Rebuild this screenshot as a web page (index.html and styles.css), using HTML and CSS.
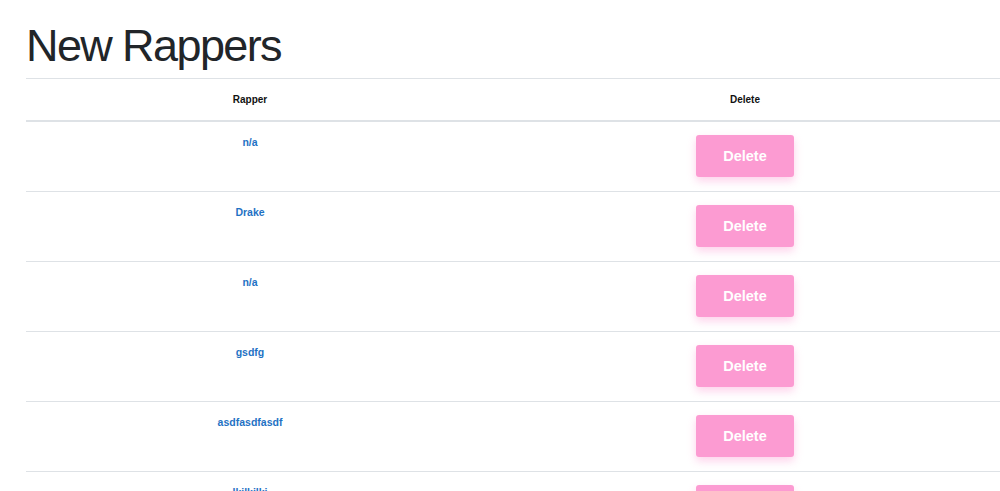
FILE: index.html
```html
<!DOCTYPE html>
<html>
<head>
<meta charset="utf-8">
<link rel="stylesheet" href="styles.css">
</head>
<body>
<div class="page">
  <h1 class="title">New Rappers</h1>
  <table class="rappers">
    <thead>
      <tr><th class="col-name">Rapper</th><th class="col-del">Delete</th></tr>
    </thead>
    <tbody>
      <tr><td class="name-cell"><a class="name">n/a</a></td><td class="del-cell"><button class="del">Delete</button></td></tr>
      <tr><td class="name-cell"><a class="name">Drake</a></td><td class="del-cell"><button class="del">Delete</button></td></tr>
      <tr><td class="name-cell"><a class="name">n/a</a></td><td class="del-cell"><button class="del">Delete</button></td></tr>
      <tr><td class="name-cell"><a class="name">gsdfg</a></td><td class="del-cell"><button class="del">Delete</button></td></tr>
      <tr><td class="name-cell"><a class="name">asdfasdfasdf</a></td><td class="del-cell"><button class="del">Delete</button></td></tr>
      <tr><td class="name-cell"><a class="name">lkjlkjlkj</a></td><td class="del-cell"><button class="del">Delete</button></td></tr>
    </tbody>
  </table>
</div>
</body>
</html>
```
FILE: styles.css
```css
html, body {
  margin: 0;
  padding: 0;
  background: #fff;
  overflow: hidden;
}
body {
  font-family: "Liberation Sans", Arial, sans-serif;
  color: #212529;
}
.page {
  padding: 18px 0 0 26px;
}
.title {
  margin: 0 0 5px 0;
  font-size: 45px;
  font-weight: 400;
  line-height: 55px;
  letter-spacing: -1.6px;
  color: #212529;
}
.rappers {
  border-collapse: collapse;
  width: 990px;
  table-layout: fixed;
}
.col-name { width: 448px; }
.col-del { width: 542px; }
.rappers th {
  font-size: 10px;
  font-weight: 700;
  color: #111;
  height: 41px;
  padding: 0;
  text-align: center;
  vertical-align: middle;
  border-top: 1px solid #dee2e6;
  border-bottom: 2px solid #dee2e6;
}
.rappers td {
  text-align: center;
  vertical-align: top;
  border-bottom: 1px solid #dee2e6;
}
.name-cell {
  padding: 10px 0 0 0;
}
.del-cell {
  padding: 13px 0 14px 0;
  height: 42px;
}
.name {
  display: inline-block;
  font-size: 10.5px;
  font-weight: 700;
  line-height: 12px;
  color: #1f72c4;
}
.del {
  width: 98px;
  height: 42px;
  border: none;
  border-radius: 3px;
  background: #fc9bd2;
  color: #fff;
  font-family: "Liberation Sans", Arial, sans-serif;
  font-size: 14.5px;
  font-weight: 700;
  box-shadow: 0 4px 8px rgba(252, 155, 210, 0.45);
  display: block;
  margin: 0 auto;
}
```
